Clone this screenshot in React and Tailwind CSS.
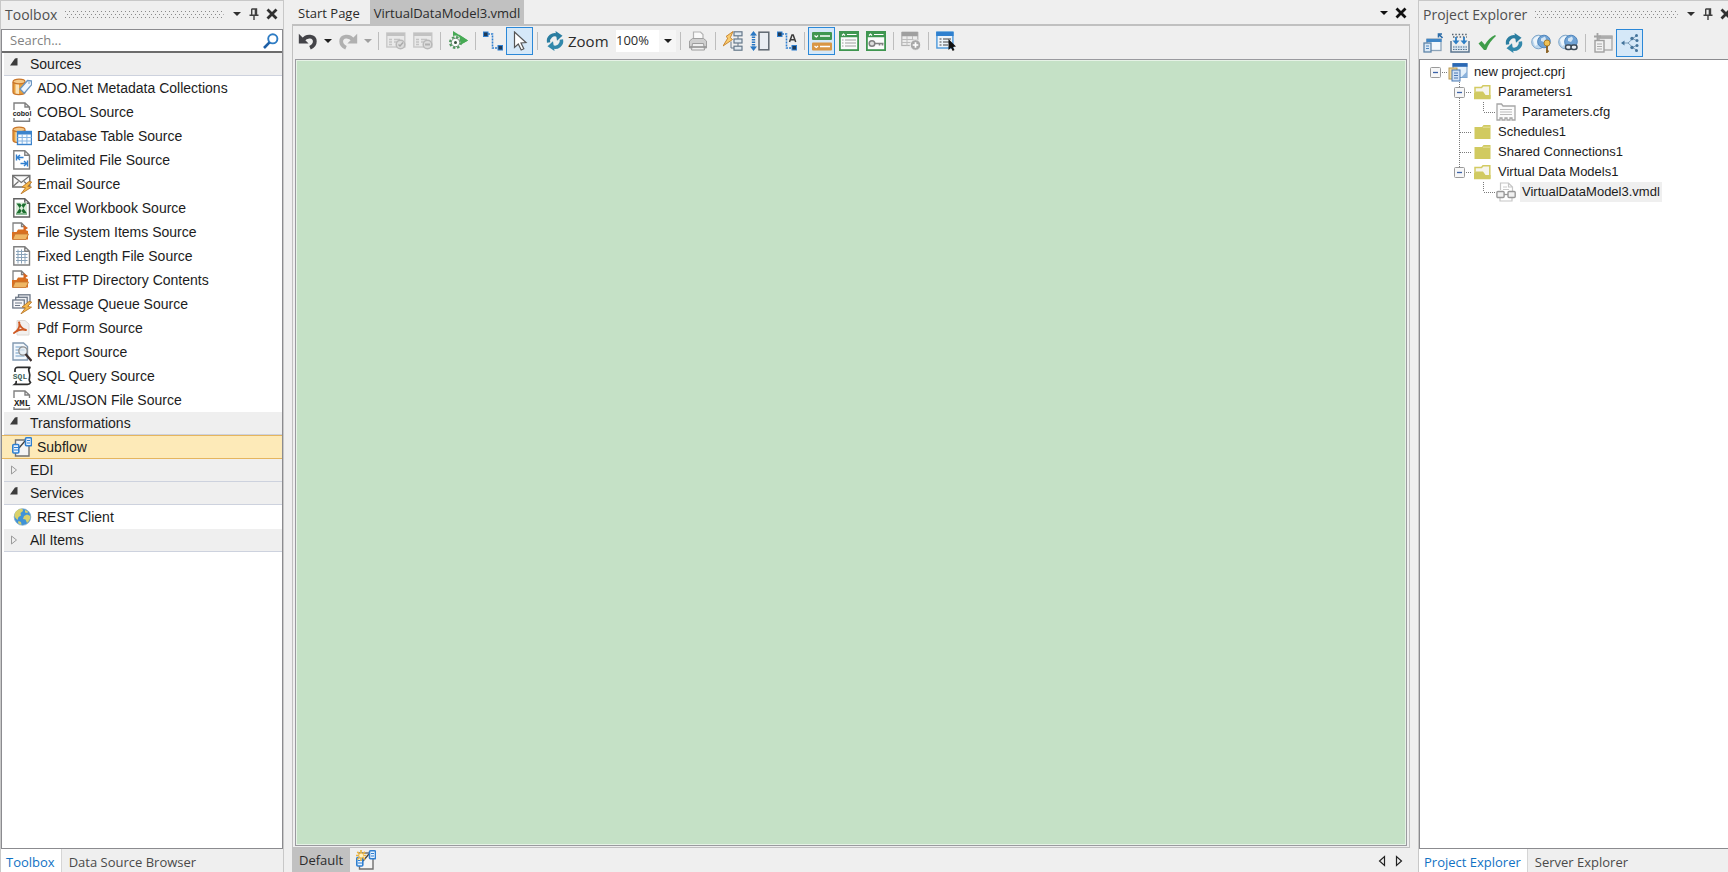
const seg = "font-['Open_Sans','Noto_Sans',sans-serif]";

/* ---------- small shared drawings ---------- */

function Svg({ children, className = "size-5", box = 20 }) {
  return (
    <svg viewBox={`0 0 ${box} ${box}`} className={`${className} shrink-0`} fill="none" aria-hidden="true">
      {children}
    </svg>
  );
}

const Caret = ({ className = "text-[#1e1e1e]" }) => (
  <svg viewBox="0 0 10 6" className={`h-[6px] w-[10px] shrink-0 ${className}`} aria-hidden="true">
    <path d="M1 1h8L5 5z" fill="currentColor" />
  </svg>
);

const Pin = () => (
  <svg viewBox="0 0 10 12" className="h-3 w-[10px]" aria-hidden="true">
    <path d="M2.5 1h5v6M2.7 1v6M6.4 1v6M0.5 7.2h9M5 7v5" stroke="#404040" strokeWidth="1.4" fill="none" />
  </svg>
);

const Cross = ({ className = "text-[#303030]" }) => (
  <svg viewBox="0 0 12 12" className={`size-3 shrink-0 ${className}`} aria-hidden="true">
    <path d="M1.5 1.5l9 9M10.5 1.5l-9 9" stroke="currentColor" strokeWidth="2.8" />
  </svg>
);

function Grip({ id }) {
  return (
    <svg className="h-[7px] min-w-0 flex-1" aria-hidden="true">
      <defs>
        <pattern id={id} width="4" height="6" patternUnits="userSpaceOnUse">
          <rect x="0" y="0" width="1" height="1" fill="#8a8a8a" />
          <rect x="2" y="3" width="1" height="1" fill="#8a8a8a" />
        </pattern>
      </defs>
      <rect width="100%" height="7" fill={`url(#${id})`} />
    </svg>
  );
}

const Cylinder = () => (
  <>
    <path d="M1 4v10c0 1.600 2.600 2.600 6 2.600s6-1 6-2.600V4z" fill="#e8a03c" />
    <path d="M3.500 5v11.300c1 .3 2.200.4 3.500.3V6z" fill="#fbe3b8" />
    <path d="M1 4v10c0 1.600 2.600 2.600 6 2.600s6-1 6-2.600V4" stroke="#c9762a" strokeWidth="1.300" />
    <ellipse cx="7" cy="3.500" rx="6" ry="2.300" fill="#f6c987" stroke="#c9762a" strokeWidth="1.200" />
  </>
);

const Page = ({ stroke = "#808080" }) => (
  <path d="M1.800 .8h11l4.700 4.500v13.700H1.800zM12.800 .8v4.500h4.700" fill="#fff" stroke={stroke} strokeWidth="1.400" />
);

const Bolt = () => <path d="M17 7.500l-7 5.500 3.500.8-4.500 6 10.500-6.600-3.800-.8 4-4.400z" fill="#f5b84a" stroke="#b9772a" strokeWidth=".9" />;

const FolderPage = () => (
  <>
    <path d="M1 1h8.500L13 4.500V11H1zM9.500 1v3.500H13" fill="#fff" stroke="#808080" strokeWidth="1.300" />
    <path d="M0 10h4.500l1.500-2.500h6l4 1.500v8.500H0z" fill="#d96f20" />
    <path d="M3 12h13.500l-2.500 5.500H.8z" fill="#efb765" stroke="#c8752d" strokeWidth=".8" />
    <path d="M11.500 3v6l4.500-3z" fill="#d8641c" />
  </>
);

const SubflowShape = () => (
  <>
    <path d="M3.500 3h13.500v16H3.500z" fill="#f4f4f4" stroke="#707070" strokeWidth="1.400" />
    <path d="M7 11l6-7" stroke="#404040" strokeWidth="1.300" />
    <rect x=".8" y="7.500" width="6" height="8.500" rx="1" fill="#eaf4ff" stroke="#2f7fd0" strokeWidth="1.600" />
    <path d="M2 10.500h4M2 13h4" stroke="#2f7fd0" />
    <rect x="13.500" y=".8" width="6" height="8" rx="1" fill="#eaf4ff" stroke="#2f7fd0" strokeWidth="1.600" />
    <path d="M15 3.500h3M15 6h3" stroke="#2f7fd0" />
  </>
);

const SvgLabel = ({ children, x = 10, y = 15, size = 8, fill = "#1d1d1d", family = "Liberation Mono, monospace" }) => (
  <text x={x} y={y} textAnchor="middle" fontSize={size} fontWeight="700" fill={fill} fontFamily={family}>
    {children}
  </text>
);

/* ---------- toolbox icons ---------- */

const icons = {
  ado: (
    <Svg>
      <Cylinder />
      <path d="M8 11l7.500-8.500 3.800.3.400 3.900-7.500 8.500z" fill="#eef6ff" stroke="#6b95c0" strokeWidth="1.300" />
      <circle cx="17" cy="5" r=".8" fill="#6b95c0" />
    </Svg>
  ),
  cobol: (
    <Svg>
      <path d="M2 8V1h11l4.500 4v3M13 1v4h4.500M2 16v3.200H17.500V16" stroke="#808080" strokeWidth="1.400" />
      <SvgLabel size={7} y={14} family="Liberation Sans, sans-serif">cobol</SvgLabel>
    </Svg>
  ),
  table: (
    <Svg>
      <Cylinder />
      <rect x="5.500" y="5.500" width="14" height="13" fill="#f7fbff" stroke="#3b83cc" strokeWidth="1.400" />
      <path d="M5.500 5h14v3.500h-14z" fill="#3b83cc" />
      <path d="M5.500 11.500h14M5.500 15h14M10.200 8v10M14.900 8v10" stroke="#86b4e2" />
    </Svg>
  ),
  delimited: (
    <Svg>
      <Page />
      <path d="M4.500 4.500v6M5 7.500h6.500M8 5L5.300 7.500 8 10" stroke="#2f7fd0" strokeWidth="1.400" />
      <path d="M15.500 10.500v6M8.500 13.500H15M12 11l2.700 2.500L12 16" stroke="#2f7fd0" strokeWidth="1.400" />
    </Svg>
  ),
  email: (
    <Svg>
      <rect x=".8" y="1.500" width="17" height="11.500" fill="#fafafa" stroke="#707070" strokeWidth="1.500" />
      <path d="M1 2l8.300 6.500L17.500 2M1 12.500l5.500-5M17.500 12.500l-5.500-5" stroke="#707070" strokeWidth="1.200" />
      <Bolt />
    </Svg>
  ),
  excel: (
    <Svg>
      <Page stroke="#606060" />
      <rect x="4" y="4.500" width="11" height="11.500" fill="#d9ecd8" />
      <path d="M4.500 5.500h3.700l6.500 9.500H11zM14.500 5.500h-3.700L4.500 15h3.700z" fill="#1d6f30" />
      <path d="M4 16h11" stroke="#207a35" />
    </Svg>
  ),
  folder: (
    <Svg>
      <FolderPage />
    </Svg>
  ),
  fixed: (
    <Svg>
      <Page />
      <path d="M4 5.500h8M4 8.500h11.500M4 11.500h11.500M4 14.500h11.500M6 3.500v14M9.500 3.500v14M13 7v10.500" stroke="#8aa3b9" strokeWidth="1" />
    </Svg>
  ),
  queue: (
    <Svg>
      <rect x="6.500" y=".8" width="11.500" height="8" fill="#eef0f4" stroke="#6f7988" strokeWidth="1.300" />
      <rect x="3.700" y="3.300" width="11.500" height="8" fill="#eef0f4" stroke="#6f7988" strokeWidth="1.300" />
      <rect x=".8" y="6" width="11.500" height="8" fill="#f8f8fa" stroke="#6f7988" strokeWidth="1.300" />
      <path d="M3 9h7M3 11.500h5" stroke="#6f7988" />
      <Bolt />
    </Svg>
  ),
  pdf: (
    <Svg>
      <path d="M5 2.500h8l4 3.500v11H5z" fill="#f2f0ee" stroke="#dedad6" />
      <path d="M2 15c3.500-2 6-6 5.300-10.500M7 4.500c1 4 3 6.500 7 7.500M4 13.500c3-2 6-2.300 10-1.500" stroke="#cf5a24" strokeWidth="1.900" strokeLinecap="round" />
    </Svg>
  ),
  report: (
    <Svg>
      <path d="M1 1h10.500l4 3.500V18H1z" fill="#f3f8fd" stroke="#8299b1" strokeWidth="1.400" />
      <path d="M3.500 5h7M3.500 8h9M3.500 11h5M3.500 14h9" stroke="#6f9bc6" strokeWidth="1.200" />
      <circle cx="11" cy="9" r="4.200" fill="#dfe9f1" fillOpacity=".7" stroke="#909090" strokeWidth="1.300" />
      <path d="M13.500 12l6 7" stroke="#3c3030" strokeWidth="2.300" />
    </Svg>
  ),
  sql: (
    <Svg>
      <path d="M3 6V4c0-1.700 1-2.700 2.800-2.700H18.500C16.800 2 16.500 4 17 5.500c.8 2.500 1.500 4 .5 6.500-.8 2 .3 4 1 4.500-.5 1.300-1.500 1.800-3 1.800H3c1.500-1 1.500-2 1.200-3.500" fill="#fff" stroke="#2c2c2c" strokeWidth="1.700" />
      <SvgLabel x={8} y={13} size={8} fill="#3d5f5a">SQL</SvgLabel>
    </Svg>
  ),
  xml: (
    <Svg>
      <path d="M2 8V1h11l4.500 4v3M13 1v4h4.500M2 17v2.200H17.500V17" stroke="#808080" strokeWidth="1.400" />
      <SvgLabel y={16} size={9}>XML</SvgLabel>
    </Svg>
  ),
  subflow: (
    <Svg>
      <SubflowShape />
    </Svg>
  ),
  rest: (
    <Svg>
      <circle cx="10.500" cy="10" r="8.300" fill="#3f93d8" stroke="#7fa9c4" strokeWidth=".7" />
      <path d="M4 4.500c2-2 4.500-3 6.500-2.500l.5 2-2.500 2 .5 2.500-2.500 1.500-1 3-2-2L2.500 9c0-2 .5-3.500 1.500-4.500zM12 9l3-1.500 3.300 1.500c.2 3-1.300 5.500-3.300 7l-1.500-3.500L11 12zM13 3l3 1.500-.5 1.500-2.500-.5zM6.500 14l2.500 1 .5 2.800c-1.500-.3-2.700-1-3.500-1.800z" fill="#d9d16a" />
    </Svg>
  ),
};

/* ---------- toolbar icons ---------- */

const Refresh = () => (
  <Svg>
    <path d="M3.600 11.500A6.500 6.500 0 0 1 12.500 4.200" stroke="#2a7da0" strokeWidth="3.400" />
    <path d="M10.500 0l7 4.700-5.500 5z" fill="#2a7da0" />
    <path d="M16.400 8.500A6.500 6.500 0 0 1 7.500 15.800" stroke="#3288ab" strokeWidth="3.400" />
    <path d="M9.500 20l-7-4.700 5.500-5z" fill="#3288ab" />
  </Svg>
);

const Undo = ({ flip = false }) => (
  <Svg>
    <g transform={flip ? "matrix(-1 0 0 1 20 0)" : undefined}>
      <path d="M5 9C8.500 4 16.800 4.500 16.800 10.500c0 3.200-2 5-4.800 6.200" stroke={flip ? "#b0b0b0" : "#434348"} strokeWidth="3.800" />
      <path d="M.8 2.800v9.600h9.800z" fill={flip ? "#b0b0b0" : "#434348"} />
    </g>
  </Svg>
);

const GrayWindow = ({ gear = false }) => (
  <Svg>
    <rect x=".8" y="2" width="18" height="14" fill="#e9e9e9" stroke="#c8c8c8" strokeWidth="1.400" />
    <path d="M.8 3.500h18" stroke="#c2c2c2" strokeWidth="3" />
    <path d="M3 8.500h3M3 11h3M3 13.500h3M8 8.500h6M8 11h3" stroke="#c4c4c4" strokeWidth="1.400" />
    <circle cx="14.500" cy="13.500" r="4.300" fill="#dcdcdc" stroke="#b9b9b9" strokeWidth="1.500" />
    {gear ? <path d="M12 13.500h5" stroke="#b0b0b0" strokeWidth="2" /> : <path d="M12.500 13.500l1.500 1.500 3-3.500" stroke="#a8a8a8" strokeWidth="1.400" />}
  </Svg>
);

const Run = () => (
  <Svg>
    <path d="M5 0v18L20 9.500z" fill="#46aa54" />
    <circle cx="7.500" cy="11.500" r="7" fill="#f0f0f0" />
    <circle cx="7.500" cy="11.500" r="5.300" fill="#f0f0f0" stroke="#4f9a5e" strokeWidth="2.400" strokeDasharray="2.400 1.760" />
    <circle cx="7.500" cy="11.500" r="4.200" fill="#fbfbfb" stroke="#6f9377" strokeWidth="1" />
    <circle cx="7.500" cy="11.500" r="1.500" fill="#36523d" />
    <path d="M11 3.500L20 9.500l-7 4z" fill="#46aa54" />
  </Svg>
);

const Connector = ({ label = false }) => (
  <Svg>
    <path d="M5 3h4.500v14H15" stroke="#2f7fd0" strokeWidth="1.600" strokeDasharray="2 1" />
    <rect x=".5" y="1" width="4.500" height="4.500" fill="#203a55" stroke="#2f7fd0" />
    <rect x="15" y="14.500" width="4.500" height="4.500" fill="#203a55" stroke="#2f7fd0" />
    {label && <path d="M12.500 11l2.500-7h1.200l2.500 7M13.500 8.700h4.300" stroke="#3b3b3b" strokeWidth="1.500" />}
  </Svg>
);

const Pointer = () => (
  <Svg>
    <path d="M4.500 1v15.500l3.800-3.500 2.900 6 2.600-1.200-2.800-5.800 5-.4z" fill="#fff" stroke="#555" strokeWidth="1.200" />
  </Svg>
);

const Printer = () => (
  <Svg>
    <path d="M5.500 9V1h7l2.500 2.500V9" fill="#fafafa" stroke="#b3b3b3" strokeWidth="1.200" />
    <path d="M1.500 10l3-2.500h11l3 2.500v7h-17z" fill="#cfcfcf" stroke="#a0a0a0" />
    <path d="M4.500 12.500h11l1 6.500h-13z" fill="#efefef" stroke="#9c9c9c" />
    <path d="M1.500 16h17" stroke="#979797" strokeWidth="1.700" />
  </Svg>
);

const AutoLayout = () => (
  <Svg>
    <rect x="11" y=".8" width="8" height="4" fill="#dfe8f0" stroke="#66788a" strokeWidth="1.200" />
    <rect x="11" y="8" width="8" height="4" fill="#dfe8f0" stroke="#66788a" strokeWidth="1.200" />
    <rect x="11" y="15.200" width="8" height="4" fill="#dfe8f0" stroke="#66788a" strokeWidth="1.200" />
    <path d="M15 5v3M15 12v3M8 17h3M8 10.500V17" stroke="#66788a" />
    <path d="M10 .5L3 5.500l1.800 1.600L0 15l9.500-6.500L7.300 6.700z" fill="#f9cc70" stroke="#c58028" strokeWidth=".9" />
  </Svg>
);

const FitHeight = () => (
  <Svg>
    <path d="M3.500 3v14" stroke="#2a78c4" strokeWidth="3.400" strokeDasharray="1.500 1" />
    <path d="M3.500 0L0 4.500h7zM3.500 20L0 15.500h7z" fill="#2a78c4" />
    <rect x="9" y="1.200" width="9.800" height="17.600" fill="#e9edf2" stroke="#5e6670" strokeWidth="1.500" />
  </Svg>
);

const Bars = () => (
  <Svg>
    <rect y="1" width="20" height="8" rx="1" fill="#3f9650" />
    <rect y="11.500" width="20" height="8" rx="1" fill="#d99644" />
    <path d="M2.500 4.500l1.800 1.500 1.800-1.500M8 5h10M2.500 15l1.800 1.500 1.800-1.500M8 15.500h10" stroke="#fff" strokeWidth="1.300" />
  </Svg>
);

const GreenWindow = ({ keyed = false }) => (
  <Svg>
    <rect x=".9" y=".9" width="18.200" height="18.200" fill="#fbfbfb" stroke="#3f9650" strokeWidth="1.800" />
    <path d="M1 3.500h18" stroke="#3f9650" strokeWidth="5.500" />
    <path d="M3 4.500l1.500-1.500L6 4.500M8 3.500h9.500" stroke="#fff" strokeWidth="1.200" />
    {keyed ? (
      <>
        <circle cx="6" cy="12.500" r="2.800" fill="#ddd" stroke="#808080" strokeWidth="1.500" />
        <path d="M9 12.500h8.500M13.500 12.500v2M16.500 12.500v2" stroke="#808080" strokeWidth="1.600" />
      </>
    ) : (
      <path d="M3 9h1.500M6 9h11M3 12h1.500M6 12h11M3 15h1.500M6 15h11" stroke="#a0a0a0" strokeWidth="1.200" />
    )}
  </Svg>
);

const AddTable = () => (
  <Svg>
    <rect x=".8" y="1.500" width="16" height="13" fill="#ececec" stroke="#b2b2b2" strokeWidth="1.200" />
    <path d="M.8 3h16" stroke="#9f9f9f" strokeWidth="4.500" />
    <path d="M1 8.500h16M1 11.500h16M6 5v10M11.500 5v10" stroke="#bdbdbd" />
    <circle cx="14.500" cy="14" r="5.300" fill="#a8a8a8" stroke="#efefef" />
    <path d="M14.500 11.200v5.600M11.700 14h5.600" stroke="#fff" strokeWidth="1.700" />
  </Svg>
);

const SelectList = () => (
  <Svg>
    <rect x=".9" y="1" width="16" height="16" fill="#eef4fa" stroke="#4b98db" strokeWidth="1.400" />
    <path d="M.2 3h17.400" stroke="#2f80cf" strokeWidth="4" />
    <path d="M3.500 8h2M7 8h8M3.500 11h2M7 11h6M3.500 14h2M7 14h5" stroke="#444" strokeWidth="1.200" />
    <path d="M12.500 8v11l2.500-2.200 1.700 3.200 1.800-.9-1.600-3.100 3.100-.4z" fill="#111" />
  </Svg>
);

const WindowUp = () => (
  <Svg>
    <rect x="4" y="6" width="14" height="11.500" fill="#f3f7fb" stroke="#8ba3b8" strokeWidth="1.300" />
    <path d="M3.400 7.500h15.200" stroke="#3f86c6" strokeWidth="3" />
    <rect x="1" y="10" width="7" height="9" fill="#dbe9f5" stroke="#5e84a8" strokeWidth="1.300" />
    <path d="M3 13h3M3 15.500h3" stroke="#4c86bf" />
    <path d="M19.500 5l-3.500-3.500M15.500 4.500V1h3.500" stroke="#2b6ca8" strokeWidth="1.600" />
  </Svg>
);

const Deploy = () => (
  <Svg>
    <path d="M2 1.500h16M3 4h14" stroke="#55636f" strokeWidth="1.500" strokeDasharray="1.500 1.800" />
    <path d="M1 8v11h18V8" stroke="#5b7690" strokeWidth="1.500" />
    <path d="M3 12.500h14v5H3z" fill="#d3e2ef" />
    <path d="M3 14h14M3 16.500h14" stroke="#5b7690" strokeWidth="1.200" strokeDasharray="1.500 1" />
    <path d="M6 4v4M14 4v4" stroke="#2d7fc6" strokeWidth="1.800" />
    <path d="M2.500 7.500h7L6 11.500zM10.500 7.500h7L14 11.500z" fill="#2d7fc6" />
  </Svg>
);

const Check = () => (
  <Svg>
    <path d="M1.500 10.500l3-2.500 3.300 3.700c2.500-4.200 6-7.500 10.200-9.700l1 1C14.800 6.700 11.200 11.500 9.200 17H7z" fill="#3f9d4a" />
  </Svg>
);

const Globes = ({ link = false }) => (
  <Svg>
    <circle cx="7.500" cy="9" r="6.800" fill="#bcd7ee" stroke="#7fa5c8" />
    <path d="M2 7c2-3 4-4 6-4l1 3-3 2v4l-2 1z" fill="#edf5fb" />
    <circle cx="13" cy="8.500" r="6.300" fill="#6fa2d4" stroke="#4f86bd" />
    <path d="M10 5.500l4-2 1 2.500-2 3-3-1z" fill="#d4e6f5" />
    {link ? (
      <>
        <rect x="7.500" y="12" width="6" height="4.500" rx="2.200" fill="#e8eef4" stroke="#3b4956" strokeWidth="1.500" />
        <rect x="13" y="12" width="6" height="4.500" rx="2.200" fill="#e8eef4" stroke="#3b4956" strokeWidth="1.500" />
      </>
    ) : (
      <>
        <circle cx="16" cy="10" r="3" fill="#f0c255" stroke="#a87a24" strokeWidth=".9" />
        <path d="M16 13v6l1.500-1.500" stroke="#8a6224" strokeWidth="1.900" />
      </>
    )}
  </Svg>
);

const GrayPages = () => (
  <Svg>
    <rect x="6" y="3" width="13" height="14" fill="#efefef" stroke="#ababab" strokeWidth="1.400" />
    <path d="M5.500 4.500h14" stroke="#ababab" strokeWidth="2.800" />
    <rect x="2" y="7.500" width="9" height="11.500" fill="#f2f2f2" stroke="#a0a0a0" strokeWidth="1.400" />
    <path d="M4 11h5M4 13.500h5M4 16h5" stroke="#ababab" />
    <path d="M4.500 0v7M1 3.500h7" stroke="#a4a4a4" strokeWidth="1.800" />
  </Svg>
);

const TreeShare = () => (
  <Svg>
    <path d="M2.500 10H8M8 10l5-4.500M8 10l5 4.500M12.500 5.500l4-2.500M12.500 5.500l4 2M12.500 14.500l4-2M12.500 14.500l4 2.500" stroke="#7b9db9" strokeWidth="1" />
    <g fill="#44749b">
      <path d="M1 10l3.500-2.500v5z" />
      <circle cx="12" cy="5.500" r="1.700" />
      <circle cx="12" cy="14.500" r="1.700" />
      <circle cx="16.500" cy="2.500" r="1.500" />
      <circle cx="17" cy="7.500" r="1.500" />
      <circle cx="17" cy="12.500" r="1.500" />
      <circle cx="16.500" cy="17.500" r="1.500" />
    </g>
  </Svg>
);

const SubflowNew = () => (
  <Svg>
    <SubflowShape />
    <path d="M5 0v11M0 5.500h10.500M1.300 1.800l7.700 7.700M9 1.800L1.300 9.500" stroke="#eab543" strokeWidth="1.700" />
    <circle cx="5.200" cy="5.600" r="2" fill="#fff3c4" />
  </Svg>
);

/* ---------- building blocks ---------- */

function Tool({ label, active = false, children }) {
  return (
    <button
      type="button"
      aria-label={label}
      className={`grid h-7 w-[27px] shrink-0 place-items-center border ${active ? "border-[#2b88d8] bg-[#d5e8f8]" : "border-transparent"}`}
    >
      {children}
    </button>
  );
}

const Sep = () => (
  <span className="flex w-2 shrink-0 justify-center">
    <span className="h-[18px] w-px bg-[#bdbdbd]" />
  </span>
);

const DropTool = ({ label, className }) => (
  <button type="button" aria-label={label} className="grid h-7 w-[13px] shrink-0 place-items-center">
    <Caret className={className} />
  </button>
);

function PanelTitle({ children, id }) {
  return (
    <header className="flex h-7 shrink-0 items-center pr-[5px] pb-0.5 pl-1">
      <h2 className={`${seg} mr-2 text-[14px] text-[#505050]`}>{children}</h2>
      <Grip id={id} />
      <span className="ml-2 flex items-center gap-[7px]">
        <button type="button" aria-label="Window position"><Caret className="text-[#303030]" /></button>
        <button type="button" aria-label="Auto hide"><Pin /></button>
        <button type="button" aria-label="Close"><Cross /></button>
      </span>
    </header>
  );
}

function BottomTabs({ tabs }) {
  return (
    <nav className={`${seg} flex h-[23px] shrink-0 text-[13px] leading-[26px]`}>
      {tabs.map((t, i) => (
        <button
          key={t}
          type="button"
          className={i === 0 ? "border-r border-[#d5d5d5] bg-white pr-1.5 pl-[5px] text-[#1172c4]" : "px-[7px] text-[#4a4a4a]"}
        >
          {t}
        </button>
      ))}
    </nav>
  );
}

/* ---------- toolbox ---------- */

const groups = [
  {
    name: "Sources",
    open: true,
    items: [
      ["ADO.Net Metadata Collections", "ado"],
      ["COBOL Source", "cobol"],
      ["Database Table Source", "table"],
      ["Delimited File Source", "delimited"],
      ["Email Source", "email"],
      ["Excel Workbook Source", "excel"],
      ["File System Items Source", "folder"],
      ["Fixed Length File Source", "fixed"],
      ["List FTP Directory Contents", "folder"],
      ["Message Queue Source", "queue"],
      ["Pdf Form Source", "pdf"],
      ["Report Source", "report"],
      ["SQL Query Source", "sql"],
      ["XML/JSON File Source", "xml"],
    ],
  },
  { name: "Transformations", open: true, items: [["Subflow", "subflow"]] },
  { name: "EDI", open: false, items: [] },
  { name: "Services", open: true, items: [["REST Client", "rest"]] },
  { name: "All Items", open: false, items: [] },
];

function Toolbox() {
  return (
    <aside className="flex w-[284px] shrink-0 flex-col border-t border-r border-l border-[#c8c8c8]">
      <PanelTitle id="grip-toolbox">Toolbox</PanelTitle>
      <div className="flex min-h-0 flex-1 flex-col border border-[#8b8b8f] bg-white font-['Liberation_Sans',Arial,sans-serif] text-[14px] text-[#1c1c1c]">
        <label className="flex h-[23px] shrink-0 items-center border-b-2 border-[#6c6c6c] pr-[3px] pl-2">
          <input
            aria-label="Search"
            placeholder="Search..."
            className={`${seg} min-w-0 flex-1 text-[13px] outline-none placeholder:text-[#828282]`}
          />
          <svg viewBox="0 0 16 16" className="size-4" fill="none" aria-hidden="true">
            <circle cx="9.800" cy="5.800" r="4.600" stroke="#2e7cc4" strokeWidth="1.900" />
            <path d="M6.500 9.300L1 15" stroke="#1d5fa6" strokeWidth="2.600" />
          </svg>
        </label>
        {groups.map((g) => (
          <section key={g.name}>
            <h3>
              <button type="button" aria-expanded={g.open} className="ml-0.5 flex h-[23px] w-[calc(100%-2px)] items-center border-b border-[#cdd2de] bg-[#efefef] text-left">
                <span className="flex w-[26px] shrink-0 pl-[5px]">
                  {g.open ? (
                    <svg viewBox="0 0 10 10" className="-mt-1 size-[10px]" aria-hidden="true"><path d="M8.500 1v7.500H1L6 1.500z" fill="#3c3c3c" /></svg>
                  ) : (
                    <svg viewBox="0 0 10 10" className="size-[10px]" fill="none" aria-hidden="true"><path d="M2.500 1v8L7.500 5z" stroke="#9b9b9b" /></svg>
                  )}
                </span>
                {g.name}
              </button>
            </h3>
            <ul>
              {g.items.map(([name, icon]) => (
                <li key={name}>
                  <button
                    type="button"
                    className={`flex h-6 w-full items-center gap-[5px] border-y pl-[10px] text-left ${icon === "subflow" ? "border-[#e5b55e] bg-[#fdeab8]" : "border-transparent"}`}
                  >
                    {icons[icon]}
                    {name}
                  </button>
                </li>
              ))}
            </ul>
          </section>
        ))}
      </div>
      <BottomTabs tabs={["Toolbox", "Data Source Browser"]} />
    </aside>
  );
}

/* ---------- designer ---------- */

function Designer() {
  return (
    <main className={`${seg} flex min-w-0 flex-1 flex-col text-[#2b2b2b]`}>
      <div className="flex h-6 shrink-0 items-stretch text-[13px]">
        <button type="button" className="pt-1 pr-2.5 pl-1.5">Start Page</button>
        <button type="button" className="bg-[#c1c1c1] px-1 pt-1">VirtualDataModel3.vmdl</button>
        <span className="ml-auto flex items-center gap-1.5 pt-0.5 pr-[3px]">
          <button type="button" aria-label="Open documents"><Caret className="text-[#111]" /></button>
          <button type="button" aria-label="Close document"><Cross className="text-[#111]" /></button>
        </span>
      </div>
      <div className="flex min-h-0 flex-1 flex-col border border-t-2 border-[#c0c0c0]">
        <div role="toolbar" aria-label="Designer" className="flex h-[33px] shrink-0 items-center pb-[3px] pl-px">
          <Tool label="Undo"><Undo /></Tool>
          <DropTool label="Undo history" />
          <Tool label="Redo"><Undo flip /></Tool>
          <DropTool label="Redo history" className="text-[#a0a0a0]" />
          <Sep />
          <Tool label="Verify"><GrayWindow /></Tool>
          <Tool label="Stop"><GrayWindow gear /></Tool>
          <Sep />
          <Tool label="Run"><Run /></Tool>
          <Sep />
          <Tool label="Link"><Connector /></Tool>
          <Tool label="Select" active><Pointer /></Tool>
          <Sep />
          <Tool label="Refresh"><Refresh /></Tool>
          <label htmlFor="zoom" className="mr-2 w-10 shrink-0 text-[15px]">Zoom</label>
          <span className="grid h-[22px] w-[60px] shrink-0 grid-cols-[1fr_17px] items-center bg-white">
            <select id="zoom" defaultValue="100%" className="col-span-2 col-start-1 row-start-1 h-full appearance-none text-[13px] outline-none">
              <option>50%</option>
              <option>100%</option>
              <option>200%</option>
            </select>
            <span className="pointer-events-none col-start-2 row-start-1 grid h-full place-items-center bg-[#f6f6f6]">
              <Caret />
            </span>
          </span>
          <Sep />
          <Tool label="Print"><Printer /></Tool>
          <Sep />
          <Tool label="Auto layout"><AutoLayout /></Tool>
          <Tool label="Fit height"><FitHeight /></Tool>
          <Tool label="Label links"><Connector label /></Tool>
          <Sep />
          <Tool label="Collapsed view" active><Bars /></Tool>
          <Tool label="Field view"><GreenWindow /></Tool>
          <Tool label="Key view"><GreenWindow keyed /></Tool>
          <Sep />
          <Tool label="Add table"><AddTable /></Tool>
          <Sep />
          <Tool label="Properties"><SelectList /></Tool>
        </div>
        <div className="mx-0.5 mb-px flex flex-1 border border-[#9a9a9f]">
          <div className="flex-1 border border-[#e6f2e6] bg-[#c5e1c6]" />
        </div>
      </div>
      <footer className="flex h-6 shrink-0 text-[13px]">
        <button type="button" className="bg-[#c1c1c1] px-[7px] pt-0.5">Default</button>
        <button type="button" aria-label="New subflow" className="pl-1.5"><SubflowNew /></button>
        <span className="ml-auto flex items-center gap-[7px] pt-px pr-1.5">
          <button type="button" aria-label="Previous tab">
            <svg viewBox="0 0 10 12" className="h-3 w-[10px]" fill="none" aria-hidden="true"><path d="M7.500 1.500v9L2.500 6z" stroke="#222" strokeWidth="1.200" /></svg>
          </button>
          <button type="button" aria-label="Next tab">
            <svg viewBox="0 0 10 12" className="h-3 w-[10px]" fill="none" aria-hidden="true"><path d="M2.500 1.500v9L7.500 6z" stroke="#222" strokeWidth="1.200" /></svg>
          </button>
        </span>
      </footer>
    </main>
  );
}

/* ---------- project explorer ---------- */

const lineProps = { stroke: "#7a7a7a", strokeWidth: 1, strokeDasharray: "1 1" };

function Guide({ kind }) {
  return (
    <svg viewBox="0 0 24 20" className="h-5 w-6 shrink-0" fill="none" aria-hidden="true">
      {kind.includes("top") && <path d="M11.500 0v10" {...lineProps} />}
      {kind.includes("bottom") && <path d="M11.500 10v10" {...lineProps} />}
      {kind.includes("right") && <path d="M12 10.500h12" {...lineProps} />}
      {kind.includes("box") && (
        <>
          <rect x="6.500" y="5.500" width="10" height="10" rx="1" fill="#f7f7f7" stroke="#9a9a9a" />
          <path d="M9 10.500h5" stroke="#3b62a8" strokeWidth="1.300" />
        </>
      )}
    </svg>
  );
}

const ProjectIcon = () => (
  <Svg>
    <rect x="5" y="1.500" width="14" height="14" fill="#e4f0fb" stroke="#6f9ac6" />
    <path d="M4.500 3h15" stroke="#2a68b4" strokeWidth="3.600" />
    <rect x="1" y="6" width="8" height="11" fill="#f2d999" stroke="#b99a55" />
    <rect x="4" y="8" width="8" height="11" fill="#cfe2f6" stroke="#4a78b0" />
    <path d="M6 11h4M6 13.500h4M6 16h4" stroke="#4a78b0" />
    <path d="M13 15.500l6-6v6z" fill="#8bb2dc" />
  </Svg>
);

const FolderOpen = () => (
  <Svg>
    <path d="M3 14V5.500h6.500L11 3.700h6.800v13" stroke="#d3cb62" strokeWidth="1.500" fill="#f6f5ee" />
    <path d="M2 17.300V11.500l2-2h7l2.500 3.500h5v4.300z" fill="#d1ca60" />
  </Svg>
);

const FolderClosed = () => (
  <Svg>
    <path d="M2.500 5h7.500l1.500-2H18.500v14h-16z" fill="#d1ca60" />
    <path d="M11 5.200h7.500" stroke="#e6e1a0" />
  </Svg>
);

const CfgIcon = () => (
  <Svg>
    <path d="M1 16.500V2h4.500l1.500 2h12v14h-3v-2h-2v2h-3v-2H9v2H6v-2H4v2H1z" fill="#fbfbfb" stroke="#a6a6a6" strokeWidth="1.300" />
    <path d="M4 7.500h12M4 10h12M4 12.500h12" stroke="#bbb" />
  </Svg>
);

const ModelIcon = () => (
  <Svg>
    <path d="M4.500 8V1h8l4 4v4M12.500 1v4h4M4 16v3h12v-3" stroke="#c6c6c6" strokeWidth="1.200" />
    <path d="M7 5h4M7 7.500h6" stroke="#cacaca" />
    <rect x=".9" y="9.500" width="7.200" height="6" rx="1" fill="#f2f2f2" stroke="#999" strokeWidth="1.400" />
    <rect x="12" y="9.500" width="7.200" height="6" rx="1" fill="#f2f2f2" stroke="#999" strokeWidth="1.400" />
    <path d="M8 12.500h4" stroke="#999" strokeWidth="1.300" />
  </Svg>
);

const tree = [
  { name: "new project.cprj", guides: ["box right"], icon: <ProjectIcon />, level: 1 },
  { name: "Parameters1", guides: ["", "top bottom box right"], icon: <FolderOpen />, level: 2 },
  { name: "Parameters.cfg", guides: ["", "top bottom", "top right"], icon: <CfgIcon />, level: 3 },
  { name: "Schedules1", guides: ["", "top bottom right"], icon: <FolderClosed />, level: 2 },
  { name: "Shared Connections1", guides: ["", "top bottom right"], icon: <FolderClosed />, level: 2 },
  { name: "Virtual Data Models1", guides: ["", "top box right"], icon: <FolderOpen />, level: 2 },
  { name: "VirtualDataModel3.vmdl", guides: ["", "", "top right"], icon: <ModelIcon />, level: 3, selected: true },
];

function ProjectExplorer() {
  return (
    <aside className="flex w-[310px] shrink-0 flex-col overflow-hidden border-t border-l border-[#c8c8c8]">
      <div className="-mr-[9px] shrink-0">
        <PanelTitle id="grip-explorer">Project Explorer</PanelTitle>
      </div>
      <div role="toolbar" aria-label="Project" className="flex h-[30px] shrink-0 items-center pb-0.5">
        <Tool label="Open project"><WindowUp /></Tool>
        <Tool label="Deploy"><Deploy /></Tool>
        <Tool label="Verify project"><Check /></Tool>
        <Tool label="Refresh project"><Refresh /></Tool>
        <Tool label="Server credentials"><Globes /></Tool>
        <Tool label="Server link"><Globes link /></Tool>
        <Sep />
        <Tool label="Add document"><GrayPages /></Tool>
        <Tool label="Show hierarchy" active><TreeShare /></Tool>
      </div>
      <div className="flex-1 border-y border-l border-[#8b8b8f] bg-white pt-0.5 pl-1 font-['Liberation_Sans',Arial,sans-serif] text-[13px] text-[#1c1c1c]">
        <ul role="tree">
          {tree.map((n) => (
            <li key={n.name} role="treeitem" aria-level={n.level} aria-selected={!!n.selected} className="flex h-5 items-center">
              {n.guides.map((g, i) => (
                <Guide key={i} kind={g} />
              ))}
              <span className="flex w-6 shrink-0">{n.icon}</span>
              <button type="button" className={`h-5 px-0.5 ${n.selected ? "bg-[#efefef]" : ""}`}>{n.name}</button>
            </li>
          ))}
        </ul>
      </div>
      <BottomTabs tabs={["Project Explorer", "Server Explorer"]} />
    </aside>
  );
}

export default function App() {
  return (
    <div className="flex h-screen min-h-[600px] gap-2 overflow-hidden bg-[#efefef]">
      <Toolbox />
      <Designer />
      <ProjectExplorer />
    </div>
  );
}
